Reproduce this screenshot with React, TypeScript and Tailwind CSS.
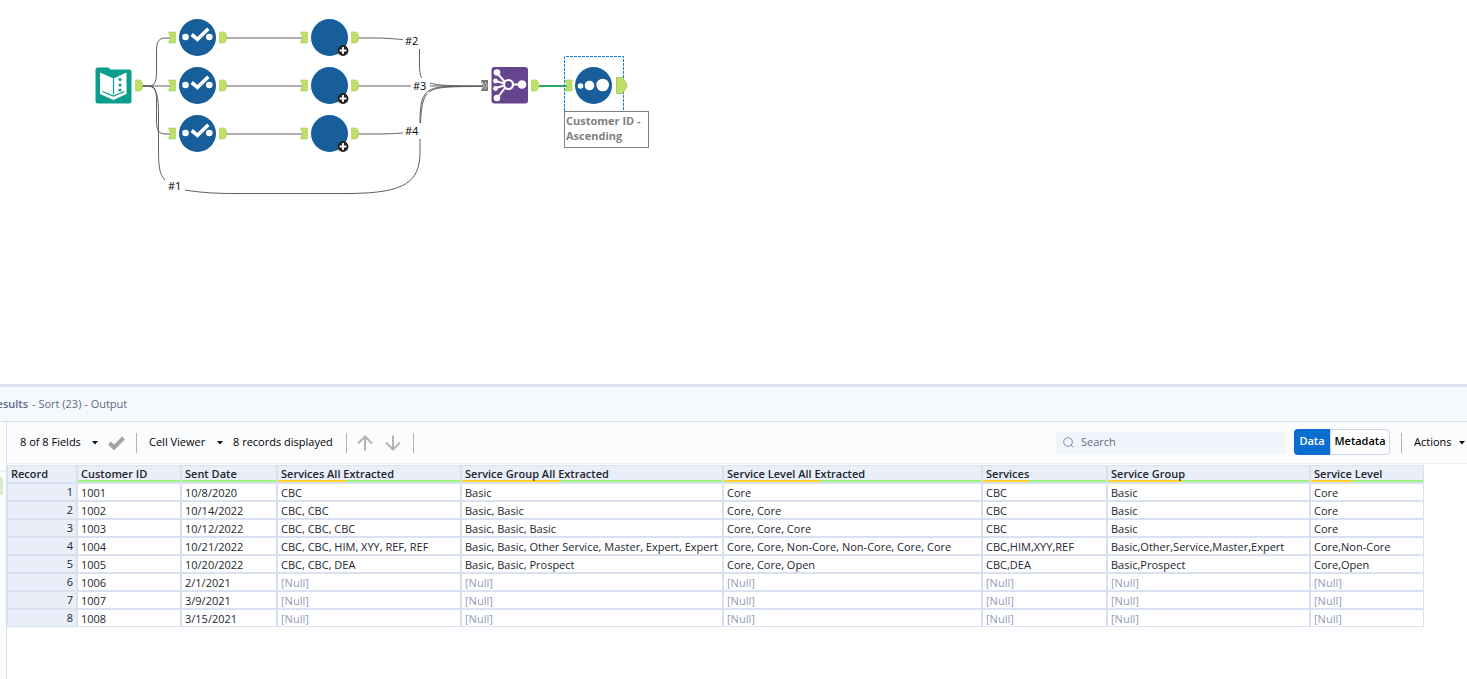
import type { ReactNode } from 'react'

type Row = (string | null)[]

const columns = [
  { name: 'Customer ID', width: 'w-[104px]' },
  { name: 'Sent Date', width: 'w-[96px]' },
  { name: 'Services All Extracted', width: 'w-[184px]' },
  { name: 'Service Group All Extracted', width: 'w-[262px]' },
  { name: 'Service Level All Extracted', width: 'w-[259px]' },
  { name: 'Services', width: 'w-[125px]' },
  { name: 'Service Group', width: 'w-[203px]' },
  { name: 'Service Level', width: 'w-[114px]' },
]

const rows: Row[] = [
  ['1001', '10/8/2020', 'CBC', 'Basic', 'Core', 'CBC', 'Basic', 'Core'],
  ['1002', '10/14/2022', 'CBC, CBC', 'Basic, Basic', 'Core, Core', 'CBC', 'Basic', 'Core'],
  ['1003', '10/12/2022', 'CBC, CBC, CBC', 'Basic, Basic, Basic', 'Core, Core, Core', 'CBC', 'Basic', 'Core'],
  [
    '1004',
    '10/21/2022',
    'CBC, CBC, HIM, XYY, REF, REF',
    'Basic, Basic, Other Service, Master, Expert, Expert',
    'Core, Core, Non-Core, Non-Core, Core, Core',
    'CBC,HIM,XYY,REF',
    'Basic,Other,Service,Master,Expert',
    'Core,Non-Core',
  ],
  ['1005', '10/20/2022', 'CBC, CBC, DEA', 'Basic, Basic, Prospect', 'Core, Core, Open', 'CBC,DEA', 'Basic,Prospect', 'Core,Open'],
  ['1006', '2/1/2021', null, null, null, null, null, null],
  ['1007', '3/9/2021', null, null, null, null, null, null],
  ['1008', '3/15/2021', null, null, null, null, null, null],
]

// share of nulls in a column, drawn as the yellow part of the quality bar
const nullShare = (col: number) => (rows.filter((r) => r[col] === null).length / rows.length) * 100

/* ---------- Canvas ---------- */

function InAnchor({ x, y }: { x: number; y: number }) {
  return <path d={`M${x} ${y - 5.5}h7v11h-7l2-5.5z`} fill="#bfe066" stroke="#a5cc55" strokeWidth="0.6" />
}

function OutAnchor({ x, y }: { x: number; y: number }) {
  return <path d={`M${x} ${y - 5.5}h5l2 3v5l-2 3h-5z`} fill="#bfe066" stroke="#a5cc55" strokeWidth="0.6" />
}

function SelectTool({ y }: { y: number }) {
  return (
    <g>
      <circle cx="197.5" cy={y} r="18.5" fill="#175e9a" />
      <circle cx="185.5" cy={y - 0.5} r="3.3" fill="#fff" />
      <circle cx="209.3" cy={y - 0.5} r="3.3" fill="#fff" />
      <path d={`M191.7 ${y - 3}l5.800 4.800 10.800-10.500`} fill="none" stroke="#fff" strokeWidth="3.6" />
    </g>
  )
}

function MacroTool({ y }: { y: number }) {
  return (
    <g>
      <circle cx="329.5" cy={y} r="18.5" fill="#175e9a" />
      <circle cx="343" cy={y + 13} r="5.4" fill="#222" />
      <path d={`M339.6 ${y + 13}h6.8M343 ${y + 9.6}v6.8`} stroke="#fff" strokeWidth="1.8" />
    </g>
  )
}

function WireLabel({ className, children }: { className: string; children: ReactNode }) {
  return (
    <span className={`absolute text-[11px] leading-4 text-black ${className}`}>{children}</span>
  )
}

function Canvas() {
  const lanes = [37.5, 85.5, 133.5]

  return (
    <section className="relative h-96 shrink-0 overflow-hidden bg-white" aria-label="Workflow canvas">
      <svg width="700" height="220" viewBox="0 0 700 220" className="block">
        {/* wires */}
        <g fill="none" stroke="#606060" strokeWidth="1">
          <path d="M142 86H150C155 86 156.5 80 156.5 72V52C156.5 42 158 38 166 38H172" />
          <path d="M142 86H172" />
          <path d="M142 86H150C155 86 156.5 92 156.5 100V120C156.5 130 158 134 166 134H172" />
          <path d="M142 86H148C156 86 158.5 96 158.5 112V150C158.5 168 160 175 165 180" />
          <path d="M185 190C200 192.5 215 193.5 235 193.5H350C405 193 420 182 420 152V139" />
          <path d="M226 38H304M226 86H304M226 134H304" />
          <path d="M358 38H375C388 38 394 39 403 39.5" />
          <path d="M358 86H411" />
          <path d="M358 134H375C388 134 394 133.5 403 133" />
          <path d="M419.5 49V64C419.5 70 420 75 421.5 78" />
          <path d="M430 83C436 85 444 86 484 86M430 86H484" />
          <path d="M420 123C420 94 424 87 450 86.5H484" />
          <path d="M420.5 123C421 108 423 98 427 94M429 92C436 87 446 86.5 484 86.5" />
        </g>
        <path d="M539 86H569" stroke="#2fa866" strokeWidth="2" />

        {/* input tool */}
        <path
          d="M98 67.5h10.5l2 2h18.5a2.5 2.5 0 0 1 2.5 2.5v29a2.5 2.5 0 0 1-2.5 2.5h-31a2.5 2.5 0 0 1-2.5-2.5v-31a2.5 2.5 0 0 1 2.5-2.5z"
          fill="#0a9e8c"
        />
        <path d="M100 72.5l13.5 6 13-6v21.5l-13 6-13.5-6z" fill="#fff" />
        <path d="M113.5 78.5v16M102.5 91.5l11 4.5 11-4.5" fill="none" stroke="#0a9e8c" strokeWidth="1.2" />
        <g fill="#0a9e8c">
          <circle cx="120" cy="79.5" r="1.6" />
          <circle cx="120" cy="85" r="1.6" />
          <circle cx="120" cy="90" r="1.6" />
        </g>
        <OutAnchor x={135.5} y={85.5} />

        {lanes.map((y) => (
          <g key={y}>
            <InAnchor x={168.5} y={y} />
            <SelectTool y={y} />
            <OutAnchor x={219.5} y={y} />
            <InAnchor x={300.5} y={y} />
            <MacroTool y={y} />
            <OutAnchor x={351.5} y={y} />
          </g>
        ))}

        {/* join multiple */}
        <path d="M481 80h7v11h-7l1.5-5.5z" fill="#777" />
        <path d="M482 82l2 3.5-2 3.5M485 82l2 3.5-2 3.5" fill="none" stroke="#ddd" strokeWidth="0.9" />
        <rect x="491.5" y="67" width="36.5" height="36.5" rx="3" fill="#65468e" />
        <g fill="none" stroke="#fff" strokeWidth="2">
          <path d="M497 73l8 9M495.5 81l9 2.5M495.5 88l9-2.5M497 98l8-10M513 84.5h9" />
          <circle cx="508.5" cy="84.5" r="4.5" strokeWidth="2.2" />
        </g>
        <g fill="#fff">
          <circle cx="497" cy="72.5" r="3.3" />
          <circle cx="495.5" cy="81" r="2.4" />
          <circle cx="495.5" cy="88.5" r="2.4" />
          <circle cx="497" cy="98" r="3.3" />
          <circle cx="522" cy="84.5" r="4.3" />
        </g>
        <OutAnchor x={531.5} y={85.5} />

        {/* sort tool, selected */}
        <path d="M564.5 111V56.5H623.5V111" fill="none" stroke="#1b7fd6" strokeDasharray="3 1" />
        <InAnchor x={565} y={85.5} />
        <circle cx="593.5" cy="85.5" r="18.5" fill="#175e9a" />
        <g fill="#fff">
          <circle cx="580.5" cy="86" r="2.8" />
          <circle cx="589.5" cy="85.5" r="4.8" />
          <circle cx="602.7" cy="85" r="6.3" />
        </g>
        <path d="M616.5 77.5h6l4 6v4l-4 6h-6z" fill="#bfe066" stroke="#98c24a" strokeWidth="0.8" />
      </svg>

      <WireLabel className="top-[33px] left-[405px]">#2</WireLabel>
      <WireLabel className="top-[78px] left-[413px]">#3</WireLabel>
      <WireLabel className="top-[123px] left-[405px]">#4</WireLabel>
      <WireLabel className="top-[178px] left-[168px]">#1</WireLabel>

      <div className="absolute top-[111px] left-[564px] w-[85px] border border-[#808080] bg-white px-px pt-px pb-1 text-[11px] leading-[15px] font-bold text-[#7f7f7f]">
        Customer ID - Ascending
      </div>
    </section>
  )
}

/* ---------- Results ---------- */

function Caret() {
  return (
    <svg width="6" height="4" viewBox="0 0 6 4" className="shrink-0" aria-hidden="true">
      <path d="M0 0h6L3 3.5z" fill="#111" />
    </svg>
  )
}

function Divider() {
  return <span className="h-5 w-px shrink-0 bg-[#b4b4b4]" />
}

function Toolbar() {
  return (
    <div className="flex h-[42px] items-center border-b border-[#eef0f4] bg-[#fbfcfe] pl-[13px] text-[11px] text-black">
      <button type="button" className="flex w-[78px] items-center justify-between whitespace-nowrap">
        8 of 8 Fields
        <Caret />
      </button>
      <button type="button" aria-label="Apply" className="ml-[10px]">
        <svg width="17" height="14" viewBox="0 0 17 14" className="block">
          <path d="M1.5 7l4.5 4.5L15.5 2" fill="none" stroke="#a3a3a3" strokeWidth="4" />
        </svg>
      </button>
      <span className="w-[11px]" />
      <Divider />
      <button type="button" className="ml-3 flex w-[74px] items-center justify-between whitespace-nowrap">
        Cell Viewer
        <Caret />
      </button>
      <span className="ml-[10px] w-[101px] whitespace-nowrap">8 records displayed</span>
      <span className="w-3" />
      <Divider />
      <button type="button" aria-label="Previous" className="ml-[10px]">
        <svg width="16" height="16" viewBox="0 0 16 16" className="block" fill="none" stroke="#b4b4b4" strokeWidth="2">
          <path d="M8 15.5V2M1 8.5l7-7 7 7" />
        </svg>
      </button>
      <button type="button" aria-label="Next" className="ml-3">
        <svg width="16" height="16" viewBox="0 0 16 16" className="block" fill="none" stroke="#b4b4b4" strokeWidth="2">
          <path d="M8 0.5V14M1 7.5l7 7 7-7" />
        </svg>
      </button>
      <span className="w-3" />
      <Divider />

      <label className="ml-auto flex h-[22px] w-[230px] items-center gap-[7px] rounded bg-[#f1f4fa] pl-[7px]">
        <svg width="11" height="11" viewBox="0 0 11 11" fill="none" stroke="#7c8fb5" className="shrink-0" aria-hidden="true">
          <circle cx="5" cy="5" r="4.3" />
          <path d="M8 8l2.5 2.5" />
        </svg>
        <input
          type="text"
          aria-label="Search"
          placeholder="Search"
          className="w-full bg-transparent outline-none placeholder:text-[#5f6b85]"
        />
      </label>
      <div className="mb-[2px] ml-2 flex h-[26px]">
        <button type="button" className="w-9 rounded-l-sm bg-[#0a6ed1] font-semibold text-white">
          Data
        </button>
        <button type="button" className="w-[60px] rounded-r-sm border border-[#cfd6ee] bg-white font-semibold">
          Metadata
        </button>
      </div>
      <span className="w-[11px]" />
      <Divider />
      <button type="button" className="mr-[2px] ml-3 flex w-[51px] items-center justify-between whitespace-nowrap">
        Actions
        <Caret />
      </button>
    </div>
  )
}

function ResultsTable() {
  return (
    <table className="w-[1417px] table-fixed border-separate border-spacing-0 text-left text-[11px] leading-4 text-[#22262e]">
      <thead>
        <tr className="h-[18px] bg-[#e9eef9]">
          <th className="w-[70px] border border-[#d9e0ef] p-0 pl-[3px] font-semibold">Record</th>
          {columns.map((col, i) => (
            <th key={col.name} className={`border border-[#d9e0ef] p-0 font-semibold ${col.width}`}>
              <div className="h-[14px] pl-[3px] leading-4 whitespace-nowrap">{col.name}</div>
              <div className="h-0.5 bg-[#9df57f]">
                <div className="h-full bg-[#ffd42a]" style={{ width: `${nullShare(i)}%` }} />
              </div>
            </th>
          ))}
        </tr>
      </thead>
      <tbody>
        {rows.map((row, i) => (
          <tr key={row[0]} className="h-[18px]">
            <th scope="row" className="border border-[#d9e0ef] bg-[#e9eef9] p-0 pr-[3px] text-right font-normal">
              {i + 1}
            </th>
            {row.map((value, j) => (
              <td key={j} className="border border-[#d9e0ef] p-0 pt-0.5 pl-[3px] leading-[14px] whitespace-nowrap">
                {value ?? <span className="text-[#949ab8]">[Null]</span>}
              </td>
            ))}
          </tr>
        ))}
      </tbody>
    </table>
  )
}

export default function App() {
  return (
    <main className="flex min-h-screen flex-col overflow-hidden bg-white font-['Open_Sans','Noto_Sans',sans-serif]">
      <Canvas />
      <section className="flex grow flex-col border-t-[3px] border-[#d9e0ef]">
        <header className="flex h-[35px] items-center gap-1 border-b border-[#d9e0ef] bg-[#f5f8fd] text-[11px] text-[#5f6b85]">
          <span className="flex w-7 justify-end overflow-hidden font-semibold">Results</span>
          <span>- Sort (23) - Output</span>
        </header>
        <div className="flex grow">
          <aside className="w-[7px] shrink-0 border-r border-[#d9e0ef] bg-[#fbfcfe] pt-[49px]">
            <div className="h-[6px] border-t border-[#e6e9ef]" />
            <div className="h-[18px] w-[3px] rounded-r-sm bg-[#d6ebc8]" />
          </aside>
          <div className="min-w-0 grow overflow-hidden">
            <Toolbar />
            <div className="pt-px">
              <ResultsTable />
            </div>
          </div>
        </div>
      </section>
    </main>
  )
}
